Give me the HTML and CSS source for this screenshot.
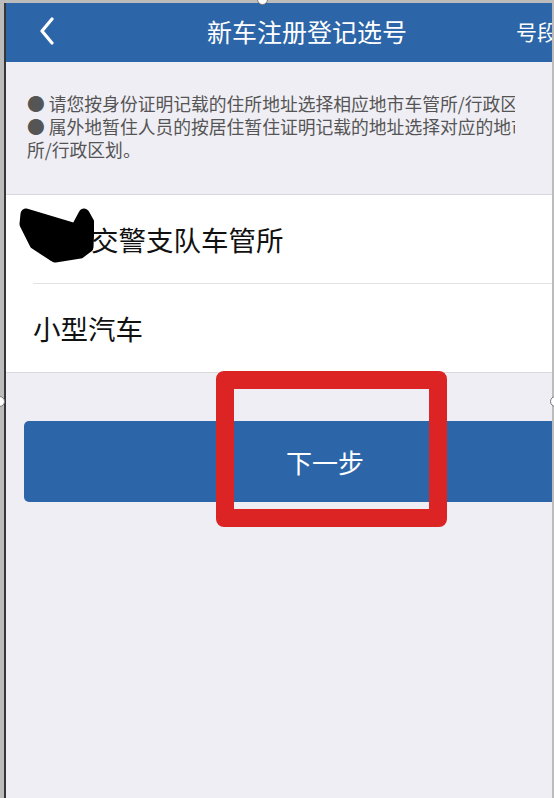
FILE: index.html
```html
<!DOCTYPE html>
<html>
    <head>
        <meta charset="utf-8">
        <link rel="stylesheet" href="styles.css">
    </head>

    <body>
        <div class="frame">
            <div class="header">
                <span class="back">
                    <svg width="16" height="28" viewBox="0 0 16 28">
                        <polyline points="13,2 3,14 13,26" fill="none" stroke="#fff" stroke-width="3.2" stroke-linecap="round" stroke-linejoin="round"/>
                    </svg>
                </span>
                <h1 class="title">新车注册登记选号</h1>
                <span class="header-right">号段</span>
            </div>

            <div class="notice">
                <p>● 请您按身份证明记载的住所地址选择相应地市车管所/行政区划。</p>
                <p>● 属外地暂住人员的按居住暂住证明记载的地址选择对应的地市车管<br>所/行政区划。</p>
            </div>

            <div class="list">
                <div class="row row-first">
                    <svg class="scribble" width="76" height="58" viewBox="0 0 76 58">
                        <path d="M8,7 L58,22 L66,7 L71,16 L70,40 L62,46 L37,50 L17,37 L7,17 Z" fill="#000" stroke="#000" stroke-width="11" stroke-linejoin="round"/>
                        <circle cx="36" cy="46" r="8" fill="#000"/>
                    </svg>交警支队车管所
                </div>
                <div class="row">小型汽车</div>
            </div>

            <button class="next-button">下一步</button>
        </div>

        <div class="mark"></div>
        <span class="handle handle-top"></span>
        <span class="handle handle-left"></span>
        <span class="handle handle-right"></span>
    </body>
</html>
```

FILE: styles.css
```css
body {
    margin: 0;
    padding: 3px 2px 0 4px;
    background-color: #bcbcbc;
    font-family: "Noto Sans CJK SC", "Noto Sans", sans-serif;
    overflow: hidden;
}

.frame {
    height: 795px;
    background-color: #efeef4;
    border-left: 2px solid #363636;
    overflow: hidden;
}

.header {
    height: 59px;
    background-color: #2d66a8;
    display: flex;
    align-items: center;
    white-space: nowrap;
    color: #fff;
    padding-bottom: 4px;
    box-sizing: border-box;
}

.back {
    display: flex;
    margin-left: 33px;
    flex-shrink: 0;
}

.title {
    margin: 0 0 0 152px;
    font-size: 25px;
    font-weight: normal;
    flex-shrink: 0;
}

.header-right {
    margin-left: 109px;
    font-size: 21px;
    flex-shrink: 0;
}

.notice {
    margin: 30px 0 0 21px;
    width: 488px;
    overflow: hidden;
    color: #555;
    font-size: 17.8px;
    line-height: 23px;
    white-space: nowrap;
}

.notice p {
    margin: 0;
}

.list {
    margin-top: 33px;
    background-color: #fff;
    border-top: 1px solid #d8d8de;
    border-bottom: 1px solid #d8d8de;
}

.row {
    margin-left: 27px;
    height: 88px;
    display: flex;
    align-items: center;
    font-size: 27.5px;
    color: #111;
}

.row-first {
    border-bottom: 1px solid #e3e3e6;
}

.scribble {
    margin: 0 -3px 0 -15px;
    position: relative;
    top: -3px;
}

.next-button {
    display: block;
    margin: 48px 0 0 18px;
    width: 602px;
    height: 81px;
    border: none;
    border-radius: 5px;
    background-color: #2d66a8;
    color: #fff;
    font-family: inherit;
    font-size: 26px;
}

.mark {
    position: absolute;
    left: 216px;
    top: 371px;
    width: 231px;
    height: 156px;
    box-sizing: border-box;
    border: 18px solid #dc2424;
    border-radius: 8px;
}

.handle {
    position: absolute;
    width: 9px;
    height: 9px;
    border: 1.5px solid #777;
    border-radius: 50%;
    background-color: #fff;
}

.handle-top {
    left: 257px;
    top: -6px;
}

.handle-left {
    left: -6px;
    top: 396px;
}

.handle-right {
    left: 550px;
    top: 396px;
}
```
